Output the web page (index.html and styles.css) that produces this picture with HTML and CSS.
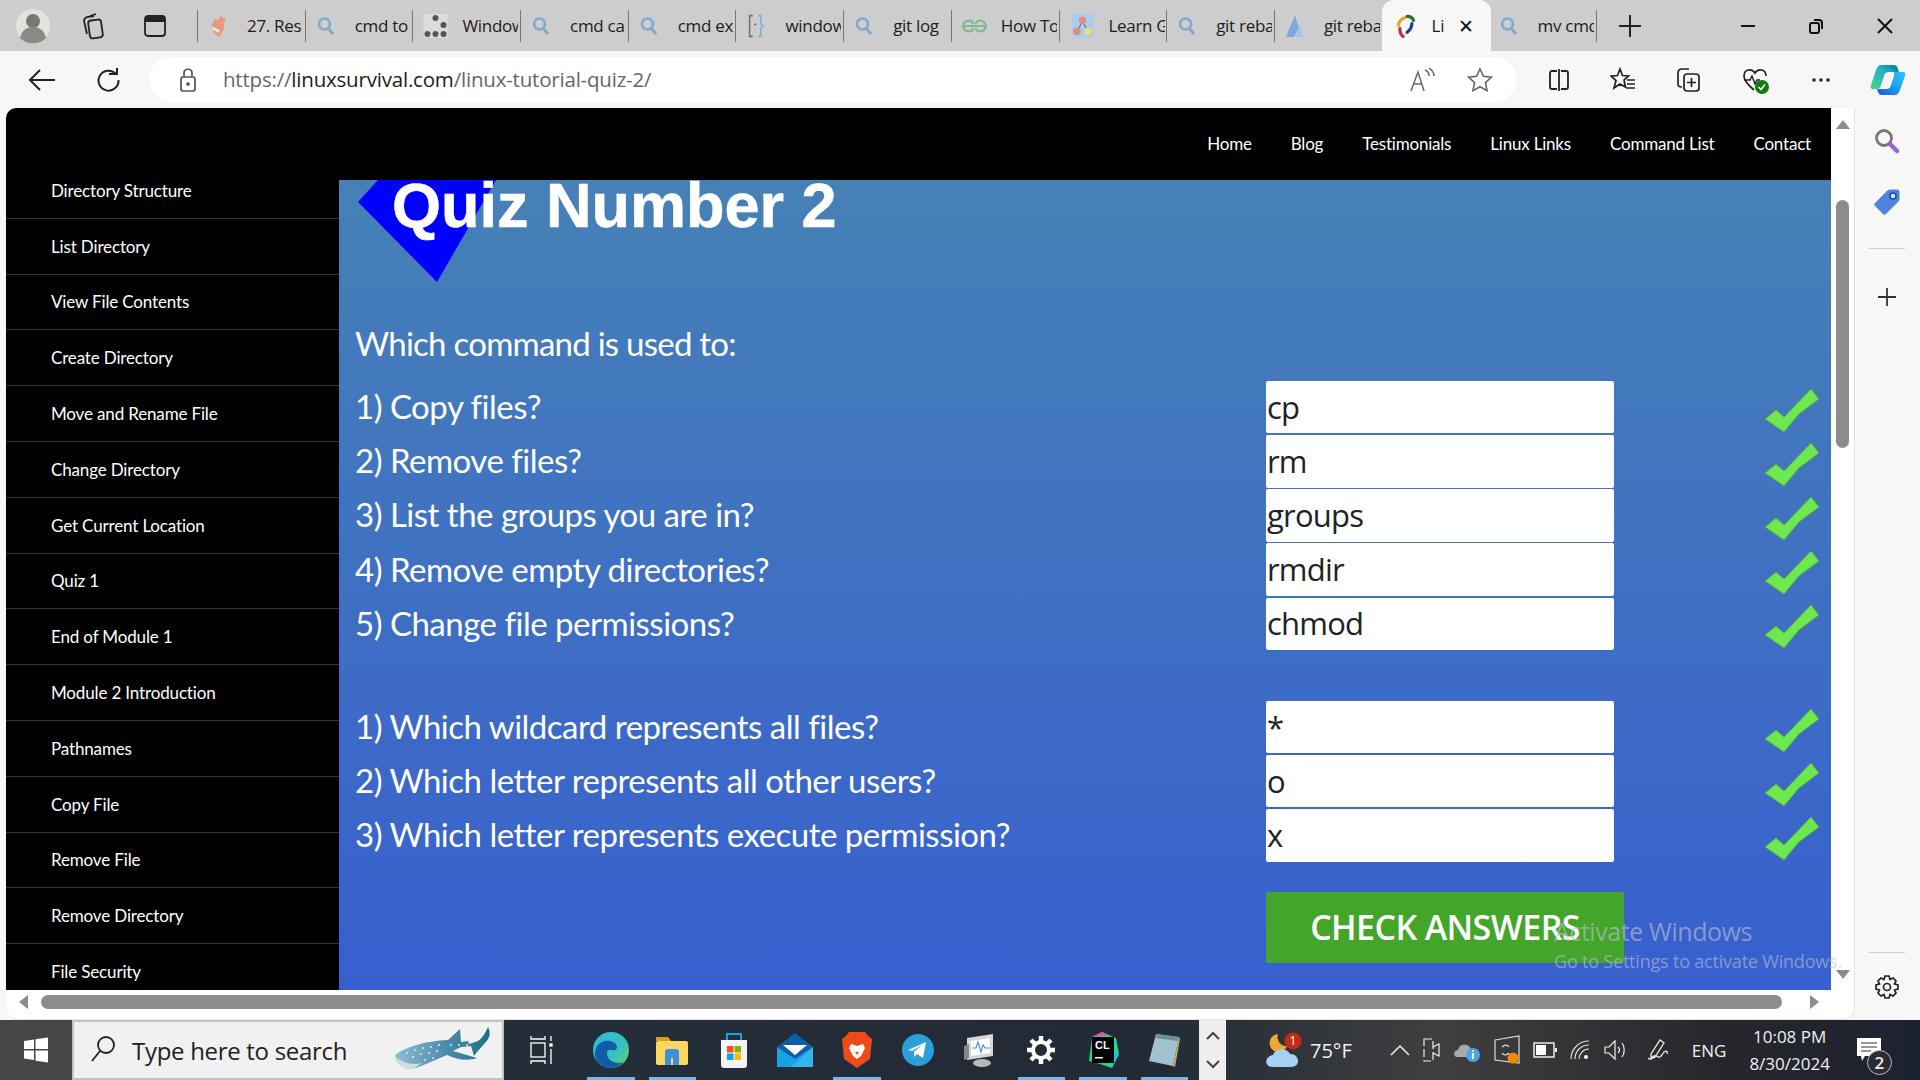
FILE: index.html
```html
<!DOCTYPE html>
<html lang="en">
<head>
    <meta charset="UTF-8">
    <title>Linux Tutorial Quiz 2</title>
    <link rel="stylesheet" href="styles.css">
</head>
<body>
    <svg class="defs" width="0" height="0">
        <symbol id="tick" viewBox="0 0 54 44"><polygon points="0,30 11,21 19,28 46,0 54,10 34,25 19,43" fill="#6ee84f" stroke="#5aa84a" stroke-width="1"/></symbol>
        <symbol id="lens" viewBox="0 0 20 20"><circle cx="8.5" cy="8" r="5.5" fill="none" stroke="#7fa9cf" stroke-width="2.6"/><path d="M12.5 12.5L17 18" stroke="#7fa9cf" stroke-width="2.8"/></symbol>
    </svg>

    <div class="tabstrip">
        <div class="strip-left">
            <svg class="strip-icon" width="36" height="36" viewBox="0 0 36 36"><circle cx="18" cy="18" r="17" fill="#e4e2da"/><circle cx="18" cy="13" r="7" fill="#777"/><path d="M5 30c2-9 8-11 13-11s11 2 13 11c-7 7-19 7-26 0z" fill="#8b8983"/></svg>
            <svg class="strip-icon" width="28" height="28" viewBox="0 0 28 28" fill="none" stroke="#222" stroke-width="1.8"><rect x="10" y="8" width="13" height="18" rx="3" transform="rotate(-8 16 17)"/><path d="M8 22L5 9c0-2 1-3 3-4l7-1M11 4l6-2"/></svg>
            <svg class="strip-icon strip-tabs" width="24" height="24" viewBox="0 0 24 24"><rect x="2" y="2" width="20" height="20" rx="3" fill="none" stroke="#222" stroke-width="1.8"/><rect x="2" y="2" width="20" height="6" fill="#222"/></svg>
        </div>
        <div class="tab"><svg class="fav" viewBox="0 0 20 26"><path d="M3 12L7 5l3 2 3-6 2 3 3 1-2 12-5 8-5-4z" fill="#e89a80"/><path d="M4 15l7 4" stroke="#f6e3da" stroke-width="3"/></svg><span class="tab-title">27. Res</span></div>
        <div class="tab"><svg class="fav"><use href="#lens"/></svg><span class="tab-title">cmd to</span></div>
        <div class="tab"><svg class="fav fav-wide" viewBox="0 0 24 24"><rect width="24" height="24" fill="#dcdcdc"/><g fill="#555"><circle cx="12" cy="4" r="3"/><circle cx="20" cy="11" r="3"/><circle cx="4" cy="20" r="3"/><circle cx="12" cy="20" r="3"/><circle cx="20" cy="20" r="3"/></g></svg><span class="tab-title">Window</span></div>
        <div class="tab"><svg class="fav"><use href="#lens"/></svg><span class="tab-title">cmd ca</span></div>
        <div class="tab"><svg class="fav"><use href="#lens"/></svg><span class="tab-title">cmd ex</span></div>
        <div class="tab"><svg class="fav" viewBox="0 0 20 30" fill="none" stroke-width="2"><path d="M6 2H2v26h4" stroke="#6b7680"/><path d="M13 2h3v10l3 3-3 3v10h-3" stroke="#73b5e0"/><circle cx="9" cy="13" r="1.2" fill="#555"/></svg><span class="tab-title">window</span></div>
        <div class="tab"><svg class="fav"><use href="#lens"/></svg><span class="tab-title">git log</span></div>
        <div class="tab"><svg class="fav fav-wide" viewBox="0 0 24 14" fill="none" stroke="#7fb98a" stroke-width="2"><path d="M12 7H1c1-6 8-7 10-2M12 7h11c-1-6-8-7-10-2M1 7c1 6 8 7 10 2M23 7c-1 6-8 7-10 2"/></svg><span class="tab-title">How To</span></div>
        <div class="tab"><svg class="fav fav-wide" viewBox="0 0 24 26"><rect width="24" height="26" rx="4" fill="#a9cdea"/><path d="M12 8L6 19M12 8l6 11" stroke="#557" stroke-width="1"/><circle cx="12" cy="7" r="4" fill="#e98880"/><circle cx="6" cy="19" r="4" fill="#e98880"/><circle cx="18" cy="19" r="4" fill="#ecdf7a"/></svg><span class="tab-title">Learn G</span></div>
        <div class="tab"><svg class="fav"><use href="#lens"/></svg><span class="tab-title">git reba</span></div>
        <div class="tab"><svg class="fav" viewBox="0 0 20 24"><path d="M10 1L1 23h8l5-9z" fill="#7fa9dc"/><path d="M11 5l8 18h-9l4-8z" fill="#a4c3e8"/></svg><span class="tab-title">git reba</span></div>
        <div class="tab tab-active">
            <svg class="fav fav-wide" viewBox="0 0 26 30" fill="none" stroke-width="4" stroke-linecap="round"><path d="M4 14c1-5 4-8 8-9" stroke="#e9a02a"/><path d="M6 18c0 5 1 8 4 10" stroke="#c0342a"/><path d="M15 3c4 0 7 2 8 5" stroke="#2f6b3a"/><path d="M21 12c0 5-2 8-6 11" stroke="#1f3f90"/></svg>
            <span class="tab-title tab-title-short">Li</span>
            <span class="tab-close">&#10005;</span>
        </div>
        <div class="tab tab-last"><svg class="fav"><use href="#lens"/></svg><span class="tab-title">mv cmd</span></div>
        <svg class="new-tab" width="24" height="24" viewBox="0 0 24 24"><path d="M12 1v22M1 12h22" stroke="#222" stroke-width="2"/></svg>
        <div class="window-controls">
            <svg width="16" height="16" viewBox="0 0 16 16"><path d="M1 8h14" stroke="#111" stroke-width="2"/></svg>
            <svg width="16" height="18" viewBox="0 0 16 18" fill="none" stroke="#111" stroke-width="2"><rect x="2" y="6" width="9" height="10" rx="2"/><path d="M6 3h5c2 0 3 1 3 3v6"/></svg>
            <svg width="18" height="18" viewBox="0 0 18 18"><path d="M2 2l14 14M16 2L2 16" stroke="#111" stroke-width="2"/></svg>
        </div>
    </div>

    <div class="toolbar">
        <svg class="tool-back" width="28" height="24" viewBox="0 0 28 24" fill="none" stroke="#222" stroke-width="2"><path d="M27 12H2M12 2L2 12l10 10"/></svg>
        <svg class="tool-reload" width="26" height="26" viewBox="0 0 26 26" fill="none" stroke="#222" stroke-width="2"><path d="M21 7a10 10 0 1 0 2.500 6"/><path d="M14 6h8V0" transform="translate(0 1)"/></svg>
        <div class="addressbar">
            <svg class="lock" width="18" height="24" viewBox="0 0 18 24" fill="none" stroke="#555" stroke-width="1.7"><rect x="2" y="9" width="14" height="14" rx="2"/><path d="M5 9V5c0-5 8-5 8 0v4"/><circle cx="9" cy="16" r="1" fill="#555"/></svg>
            <div class="url">https://<span class="url-host">linuxsurvival.com</span>/linux-tutorial-quiz-2/</div>
            <svg class="read-aloud" width="26" height="26" viewBox="0 0 26 26" fill="none" stroke="#666" stroke-width="1.5"><path d="M2 24L9 5l6 19M4.500 17h9"/><path d="M16 3c3 1 4 3 4 6M20 1c3 2 5 4 5 8"/></svg>
            <svg class="star" width="26" height="26" viewBox="0 0 26 26" fill="none" stroke="#666" stroke-width="1.6"><path d="M13 2l3.400 7.300 8 .9-6 5.500 1.700 8L13 19.700l-7.100 4 1.700-8-6-5.500 8-.9z"/></svg>
        </div>
        <div class="tools-right">
            <svg width="24" height="24" viewBox="0 0 24 24" fill="none" stroke="#222" stroke-width="1.8"><path d="M10 3H5a2 2 0 0 0-2 2v14a2 2 0 0 0 2 2h5M14 3h5a2 2 0 0 1 2 2v14a2 2 0 0 1-2 2h-5M12 1v22"/></svg>
            <svg width="26" height="26" viewBox="0 0 26 26" fill="none" stroke="#222" stroke-width="1.7"><path d="M10 2l2.500 6.500 6 .5-4.500 4 1.500 7L10 17l-6 4 2-7.500L1 9l6.500-.5zM17 13h8M17 17h8M16 21h9"/></svg>
            <svg width="26" height="26" viewBox="0 0 26 26" fill="none" stroke="#222" stroke-width="1.7"><path d="M6 20c-3 0-4-1-4-3V6c0-3 2-4 4-4h7"/><rect x="8" y="7" width="15" height="17" rx="3"/><path d="M15.500 11v9M11 15.500h9"/></svg>
            <svg width="30" height="30" viewBox="0 0 30 30"><path d="M13 25C7 20 3 16 3 11c0-7 8-8 11-3 3-5 11-4 11 3" fill="none" stroke="#222" stroke-width="1.7"/><path d="M3 15h6l2-4 3 8 2-4h3" fill="none" stroke="#222" stroke-width="1.5"/><circle cx="21" cy="22" r="7" fill="#107c10"/><path d="M17.500 22l2.500 2.500 4-5" fill="none" stroke="#fff" stroke-width="1.6"/></svg>
            <svg width="20" height="6" viewBox="0 0 20 6" fill="#222"><circle cx="3" cy="3" r="1.800"/><circle cx="10" cy="3" r="1.800"/><circle cx="17" cy="3" r="1.800"/></svg>
            <svg width="36" height="32" viewBox="0 0 36 32"><defs><linearGradient id="cp1" x1="0" y1="1" x2="1" y2="0"><stop offset="0" stop-color="#4fd08a"/><stop offset=".6" stop-color="#1fb4c8"/><stop offset="1" stop-color="#0f6f9c"/></linearGradient><linearGradient id="cp2" x1="0" y1="1" x2="1" y2="0"><stop offset="0" stop-color="#1f4fd8"/><stop offset=".5" stop-color="#1a9ff0"/><stop offset="1" stop-color="#38c4f4"/></linearGradient></defs><path d="M11 1h13c2 0 3 1 4 4l1 3H19c-3 0-4 1-5 4l-3 9c-1 3-2 4-4 4H3c-2 0-3-1-2-4L6 6c1-3 3-5 5-5z" fill="url(#cp1)"/><path d="M24 8h9c2 0 3 1 2 4l-5 14c-1 3-3 5-5 5H12c-2 0-3-1-4-3l-1-3h9c3 0 4-1 5-4l3-9c0-3 0-4 0-4z" fill="url(#cp2)"/></svg>
        </div>
    </div>

    <div class="browser-body">
        <div class="viewport">
            <div class="viewport-row">
                <div class="page">
                    <header class="site-header">
                        <nav class="site-nav">
                            <a>Home</a>
                            <a>Blog</a>
                            <a>Testimonials</a>
                            <a>Linux Links</a>
                            <a>Command List</a>
                            <a>Contact</a>
                        </nav>
                    </header>
                    <div class="site-main">
                        <aside class="side-menu">
                            <a>Directory Structure</a>
                            <a>List Directory</a>
                            <a>View File Contents</a>
                            <a>Create Directory</a>
                            <a>Move and Rename File</a>
                            <a>Change Directory</a>
                            <a>Get Current Location</a>
                            <a>Quiz 1</a>
                            <a>End of Module 1</a>
                            <a>Module 2 Introduction</a>
                            <a>Pathnames</a>
                            <a>Copy File</a>
                            <a>Remove File</a>
                            <a>Remove Directory</a>
                            <a>File Security</a>
                        </aside>
                        <main class="quiz">
                            <div class="quiz-title">
                                <svg class="diamond" width="160" height="102" viewBox="0 0 160 102"><polygon points="23,0 3,22 82,102 141,0" fill="#0000ff"/></svg>
                                <h1>Quiz Number 2</h1>
                            </div>
                            <p class="quiz-lead">Which command is used to:</p>
                            <div class="quiz-group">
                                <label class="quiz-row"><span>1) Copy files?</span><input class="answer" value="cp"><svg class="tick"><use href="#tick"/></svg></label>
                                <label class="quiz-row"><span>2) Remove files?</span><input class="answer" value="rm"><svg class="tick"><use href="#tick"/></svg></label>
                                <label class="quiz-row"><span>3) List the groups you are in?</span><input class="answer" value="groups"><svg class="tick"><use href="#tick"/></svg></label>
                                <label class="quiz-row"><span>4) Remove empty directories?</span><input class="answer" value="rmdir"><svg class="tick"><use href="#tick"/></svg></label>
                                <label class="quiz-row"><span>5) Change file permissions?</span><input class="answer" value="chmod"><svg class="tick"><use href="#tick"/></svg></label>
                            </div>
                            <div class="quiz-group quiz-group-next">
                                <label class="quiz-row"><span>1) Which wildcard represents all files?</span><input class="answer" value="*"><svg class="tick"><use href="#tick"/></svg></label>
                                <label class="quiz-row"><span>2) Which letter represents all other users?</span><input class="answer" value="o"><svg class="tick"><use href="#tick"/></svg></label>
                                <label class="quiz-row"><span>3) Which letter represents execute permission?</span><input class="answer" value="x"><svg class="tick"><use href="#tick"/></svg></label>
                            </div>
                            <button class="check-btn">CHECK ANSWERS</button>
                        </main>
                    </div>
                </div>
                <div class="vscroll">
                    <span class="arrow-up"></span>
                    <span class="vthumb"></span>
                    <span class="arrow-down"></span>
                </div>
            </div>
            <div class="hscroll">
                <span class="arrow-left"></span>
                <span class="hthumb"></span>
                <span class="arrow-right"></span>
            </div>
            <div class="watermark">
                <div class="watermark-big">Activate Windows</div>
                <div class="watermark-small">Go to Settings to activate Windows.</div>
            </div>
        </div>
        <div class="edge-bar">
            <svg class="edge-search" width="26" height="26" viewBox="0 0 26 26" fill="none"><circle cx="10" cy="10" r="7.500" stroke="#777" stroke-width="2.800"/><path d="M16 16l7 7" stroke="#9a63d8" stroke-width="4.500" stroke-linecap="round"/></svg>
            <svg class="edge-tag" width="26" height="26" viewBox="0 0 26 26"><path d="M1 14L13 2c1-1 2-1.500 4-1.500h6c1.500 0 2.500 1 2.500 2.500v6c0 2-.5 3-1.500 4L12 25c-1 1-2 1-3 0l-8-8c-1-1-1-2 0-3z" fill="#4f83e0"/><circle cx="19" cy="7" r="3" fill="#dfeafb" stroke="#23479c" stroke-width="1.500"/></svg>
            <span class="edge-line"></span>
            <svg class="edge-plus" width="20" height="20" viewBox="0 0 20 20"><path d="M10 1v18M1 10h18" stroke="#333" stroke-width="1.800"/></svg>
            <span class="edge-line edge-line-low"></span>
            <svg class="edge-gear" width="26" height="26" viewBox="0 0 26 26" fill="none" stroke="#222" stroke-width="1.700"><path d="M11 2h4l1 3.500 3-1.500 3 3-1.500 3 3.500 1v4l-3.500 1 1.500 3-3 3-3-1.500-1 3.500h-4l-1-3.500-3 1.500-3-3 1.500-3L2 15v-4l3.500-1L4 7l3-3 3 1.500z"/><circle cx="13" cy="13" r="3.500"/></svg>
        </div>
    </div>

    <footer class="taskbar">
        <div class="tb-start">
            <svg width="26" height="26" viewBox="0 0 26 26" fill="#fff"><path d="M1 4l10-1.500V12H1zM12.500 2.300L25 .5V12H12.500zM1 13.500h10V23L1 21.500zM12.500 13.500H25v12l-12.500-1.800z"/></svg>
        </div>
        <div class="tb-search">
            <svg class="search-lens" width="26" height="30" viewBox="0 0 26 30" fill="none" stroke="#222" stroke-width="1.800"><circle cx="16" cy="10" r="8"/><path d="M10 16L2 26"/></svg>
            <span class="search-text">Type here to search</span>
            <svg class="whale" width="96" height="46" viewBox="0 0 96 46"><defs><linearGradient id="shark" x1="0" y1="0" x2="1" y2="0"><stop offset="0" stop-color="#8fbdd6"/><stop offset=".5" stop-color="#4f8fae"/><stop offset="1" stop-color="#1f6f88"/></linearGradient></defs><path d="M0 28C10 20 30 14 53 13L65 2l1 13 7-1 1 3 6-2c5-1 9-6 13-15 3 6 2 11-3 16l-8 9-3 4-3-10-10 1-8 4 24 7c-8 3-20 2-30-3l-7 3-14 6C12 46 3 42 0 28z" fill="url(#shark)"/><path d="M1 30c8 7 18 8 26 6l-9 6C10 44 3 40 1 30z" fill="#cfe0d8"/><g fill="#d8eaf2"><circle cx="12" cy="26" r="1"/><circle cx="20" cy="23" r="1"/><circle cx="28" cy="21" r="1"/><circle cx="36" cy="20" r="1"/><circle cx="44" cy="18" r="1"/><circle cx="18" cy="30" r="1"/><circle cx="26" cy="27" r="1"/><circle cx="34" cy="26" r="1"/><circle cx="42" cy="24" r="1"/><circle cx="30" cy="33" r="1"/><circle cx="38" cy="31" r="1"/><circle cx="56" cy="18" r="1"/><circle cx="64" cy="18" r="1"/><circle cx="72" cy="18" r="1"/></g></svg>
        </div>
        <div class="tb-apps">
            <div class="app app-taskview"><svg width="24" height="30" viewBox="0 0 24 30" fill="none" stroke="#fff" stroke-width="1.300"><path d="M1 1v3h14V1M1 29v-3h14v3"/><rect x="1" y="8" width="14" height="14"/><path d="M21 1v5M21 14v15"/><rect x="20" y="9" width="2" height="2" fill="#fff"/></svg></div>
            <div class="app app-open"><svg width="36" height="36" viewBox="0 0 36 36"><defs><linearGradient id="edg" x1="0" y1="0" x2="1" y2="1"><stop offset="0" stop-color="#2fb9d8"/><stop offset=".6" stop-color="#35c1c0"/><stop offset="1" stop-color="#6fd65c"/></linearGradient></defs><circle cx="18" cy="18" r="18" fill="url(#edg)"/><path d="M2 22C2 12 10 8 17 9c7 1 9 8 5 9-4 1-8-2-8 4 0 6 7 9 12 9 2 0 4-1 5-2-4 5-8 7-13 7C9 36 2 30 2 22z" fill="#0f5da8"/></svg></div>
            <div class="app app-open"><svg width="34" height="30" viewBox="0 0 34 30"><path d="M1 2h12l3 4H1z" fill="#d9a016"/><rect x="1" y="6" width="32" height="24" rx="2" fill="#fcd860"/><path d="M10 30V17c0-2 1-3 3-3h8c2 0 3 1 3 3v13h-6v-7h-2v7z" fill="#3f8fd8"/></svg></div>
            <div class="app"><svg width="28" height="36" viewBox="0 0 28 36"><path d="M7 10V2h14v8" fill="none" stroke="#1ba1e2" stroke-width="2"/><path d="M1 8h26v25c0 2-1 3-3 3H4c-2 0-3-1-3-3z" fill="#f4f4f4"/><rect x="7" y="14" width="6.500" height="6.500" fill="#f25022"/><rect x="14.500" y="14" width="6.500" height="6.500" fill="#7fba00"/><rect x="7" y="21.500" width="6.500" height="6.500" fill="#00a4ef"/><rect x="14.500" y="21.500" width="6.500" height="6.500" fill="#ffb900"/></svg></div>
            <div class="app"><svg width="36" height="34" viewBox="0 0 36 34"><path d="M18 0L36 14v20H0V14z" fill="#0f5fa8"/><path d="M6 12h24l-12 10z" fill="#fff"/><path d="M0 14l18 12 18-12v20H0z" fill="#1ba1e2"/><path d="M36 14v20H14z" fill="#35c0f2" opacity=".7"/></svg></div>
            <div class="app app-open"><svg width="30" height="36" viewBox="0 0 30 36"><path d="M7 0h16l3 4 4 3-2 20-13 9-13-9L0 7l4-3z" fill="#f04a1a"/><path d="M9 12l6 2 6-2 2 4-4 8-4 3-4-3-4-8z" fill="#fff"/><path d="M13 20h4l-2 3z" fill="#f04a1a"/></svg></div>
            <div class="app"><svg width="32" height="32" viewBox="0 0 32 32"><circle cx="16" cy="16" r="16" fill="#2a9fd8"/><path d="M6 16l18-8-3 16-6-4-3 3v-5l8-7-10 6z" fill="#fff"/></svg></div>
            <div class="app"><svg width="34" height="36" viewBox="0 0 34 36"><path d="M4 6l26-4v22L4 28z" fill="#d7d7d7"/><path d="M8 9l19-3v15L8 24z" fill="#fff"/><path d="M9 16h4l2-6 3 10 2-7 2 3h5" fill="none" stroke="#4b93d6" stroke-width="1.200"/><path d="M1 14l5-2v14l-5 2z" fill="#888"/><ellipse cx="19" cy="31" rx="9" ry="4" fill="#b8b8b8"/></svg></div>
            <div class="app app-open"><svg width="28" height="28" viewBox="0 0 28 28" fill="none" stroke="#fff" stroke-width="4"><circle cx="14" cy="14" r="8"/><path d="M14 0v6M14 22v6M0 14h6M22 14h6M4 4l4 4M20 20l4 4M4 24l4-4M20 8l4-4" stroke-width="4.500"/></svg></div>
            <div class="app app-open"><svg width="32" height="36" viewBox="0 0 32 36"><path d="M5 5l10-5 14 6 3 16-7 14-12-4-11-3z" fill="#21d789"/><path d="M5 5l10-5 6 3z" fill="#f14ba3"/><path d="M25 36l7-14-6-3z" fill="#2cb5e8"/><rect x="5" y="5" width="22" height="26" fill="#000"/><text class="clion-text" x="8" y="17">CL</text><rect x="8" y="25" width="8" height="1.500" fill="#fff"/></svg></div>
            <div class="app app-open"><svg width="32" height="34" viewBox="0 0 32 34"><path d="M8 1l23 3-6 29L1 28z" fill="#9fc4cf"/><path d="M8 1l23 3-1 4L7 5z" fill="#6d8f9a"/><path d="M25 33l6-29 1 2-5 28z" fill="#caa86a"/></svg></div>
        </div>
        <div class="tb-scroll">
            <svg width="14" height="9" viewBox="0 0 14 9" fill="none" stroke="#444" stroke-width="2"><path d="M1 8l6-6 6 6"/></svg>
            <svg width="14" height="9" viewBox="0 0 14 9" fill="none" stroke="#444" stroke-width="2"><path d="M1 1l6 6 6-6"/></svg>
        </div>
        <div class="tb-tray">
            <div class="weather">
                <svg width="38" height="36" viewBox="0 0 38 36"><path d="M12 2a9 9 0 1 0 9 12A9 9 0 0 1 12 2z" fill="#f0a830"/><path d="M7 35c-9 0-9-11 0-12 2-7 14-8 17-1 9-1 12 13 1 13z" fill="#a8d0f0"/><circle cx="27" cy="9" r="8.500" fill="#c42b1c"/><text class="weather-badge" x="27" y="13">1</text></svg>
                <span class="temp">75°F</span>
            </div>
            <div class="tray-icons">
                <svg width="20" height="12" viewBox="0 0 20 12" fill="none" stroke="#eee" stroke-width="1.500"><path d="M1 11l9-9 9 9"/></svg>
                <svg width="18" height="28" viewBox="0 0 18 28" fill="none" stroke="#eee" stroke-width="1.200"><path d="M1 3h9v22H1z" stroke-dasharray="8 3"/><path d="M10 11l6-3v12l-6-3"/></svg>
                <svg width="26" height="26" viewBox="0 0 26 26"><path d="M3 20c-4 0-4-7 1-7 1-7 12-7 13 0 5 0 4 7 0 7z" fill="#a9a9a9"/><circle cx="19" cy="18" r="7" fill="#4aa6e8"/><path d="M19 16v6M19 13v1.500" stroke="#fff" stroke-width="2"/></svg>
                <svg width="26" height="30" viewBox="0 0 26 30"><path d="M1 5l24-4v27L1 25z" fill="none" stroke="#ddd" stroke-width="1.200"/><path d="M8 12c3-3 6-2 7 0M15 18c-3 3-6 2-7 0" fill="none" stroke="#ddd" stroke-width="1.300"/><circle cx="19" cy="23" r="5.500" fill="#f18a00"/></svg>
                <svg width="24" height="16" viewBox="0 0 24 16"><rect x="1" y="1" width="20" height="14" fill="none" stroke="#eee" stroke-width="1.500"/><rect x="3" y="3" width="10" height="10" fill="#fff"/><rect x="22" y="6" width="2" height="4" fill="#eee"/></svg>
                <svg width="20" height="20" viewBox="0 0 20 20" fill="none" stroke="#ddd" stroke-width="1.200"><path d="M1 19C1 9 9 1 19 1M5 19c0-8 6-14 14-14M9 19c0-5 4-10 10-10"/><circle cx="16" cy="17" r="2" fill="#fff" stroke="none"/></svg>
                <svg width="22" height="22" viewBox="0 0 22 22" fill="none" stroke="#eee" stroke-width="1.200"><path d="M1 8h4l6-6v18l-6-6H1zM14 8c2 2 2 4 0 6M18 4c3 4 3 10 0 14"/></svg>
            </div>
            <svg class="pen" width="22" height="24" viewBox="0 0 22 24" fill="none" stroke="#eee" stroke-width="1.300"><path d="M13 2l4 3-9 14-4 2 0-5zM1 20c4 4 4-4 8-2s4 2 8-4c3-2 4 0 3 2"/></svg>
            <span class="lang">ENG</span>
            <div class="clock">
                <span>10:08 PM</span>
                <span>8/30/2024</span>
            </div>
            <div class="notify">
                <svg width="26" height="26" viewBox="0 0 26 26"><path d="M1 1h24v18H9l-3 5-1-5H1z" fill="#fff"/><path d="M5 6h16M5 10h16M5 14h10" stroke="#333" stroke-width="1.200"/></svg>
                <span class="notify-count">2</span>
            </div>
        </div>
    </footer>
</body>
</html>
```

FILE: styles.css
```css
* {
    box-sizing: border-box;
}
html, body {
    height: 100%;
}
body {
    margin: 0;
    height: 1080px;
    overflow: hidden;
    display: flex;
    flex-direction: column;
    font-family: 'Open Sans', sans-serif;
    background-color: #f7f7f7;
}
.defs {
    position: absolute;
}

/* tab strip */
.tabstrip {
    height: 51px;
    flex: none;
    display: flex;
    align-items: center;
    background-color: #cdcdcd;
}
.strip-left {
    width: 197px;
    flex: none;
    display: flex;
    align-items: center;
    padding-left: 15px;
    gap: 28px;
}
.strip-tabs {
    margin-left: 8px;
}
.tab {
    width: 107.7px;
    height: 32px;
    flex: none;
    display: flex;
    align-items: center;
    padding-left: 10px;
    border-left: 1px solid #777;
    overflow: hidden;
}
.tab + .tab-active + .tab-last {
    border-left: none;
}
.tab-last {
    width: 106px;
    border-right: 1px solid #777;
    padding-left: 8px;
}
.fav {
    width: 20px;
    height: 24px;
    flex: none;
    margin-right: 19px;
}
.fav-wide {
    width: 25px;
    margin-right: 14px;
}
.tab-title {
    font-size: 17px;
    letter-spacing: -0.3px;
    color: #1c1c1c;
    white-space: nowrap;
    overflow: hidden;
    width: 56px;
    flex: none;
}
.tab-active {
    height: 51px;
    width: 109px;
    border-left: none;
    background-color: #f7f7f7;
    border-radius: 12px 12px 0 0;
    padding-left: 11px;
}
.tab-active .fav {
    margin-right: 14px;
}
.tab-title-short {
    width: 20px;
}
.tab-close {
    font-size: 19px;
    color: #111;
    margin-left: 6px;
}
.new-tab {
    margin-left: 21px;
    flex: none;
}
.window-controls {
    margin-left: auto;
    display: flex;
    align-items: center;
    gap: 52px;
    padding-right: 26px;
}

/* toolbar */
.toolbar {
    height: 57px;
    flex: none;
    display: flex;
    align-items: center;
    background-color: #f7f7f7;
    padding-left: 28px;
}
.tool-reload {
    margin-left: 39px;
}
.addressbar {
    width: 1368px;
    height: 45px;
    margin-left: 28px;
    display: flex;
    align-items: center;
    background-color: #fff;
    border-radius: 23px;
    padding-left: 30px;
}
.url {
    margin: 0 0 2px 26px;
    font-size: 20.5px;
    letter-spacing: -0.2px;
    color: #666;
}
.url-host {
    color: #1c1c1c;
}
.read-aloud {
    margin-left: auto;
}
.star {
    margin-left: 32px;
    margin-right: 24px;
}
.tools-right {
    flex: 1;
    display: flex;
    align-items: center;
    justify-content: space-between;
    padding: 0 14px 0 30px;
}

/* browser viewport */
.browser-body {
    flex: 1;
    min-height: 0;
    display: flex;
    padding-left: 6px;
}
.viewport {
    position: relative;
    width: 1849px;
    flex: none;
    background-color: #fff;
    border-radius: 10px 0 12px 12px;
    border-right: 1px solid #e4e4e4;
    border-bottom: 1px solid #e4e4e4;
    overflow: hidden;
    height: 912px;
}
.viewport-row {
    display: flex;
    height: 882px;
}
.page {
    width: 1825px;
    flex: none;
    display: flex;
    flex-direction: column;
    overflow: hidden;
}
.site-header {
    height: 72px;
    flex: none;
    background-color: #000;
    display: flex;
    justify-content: flex-end;
    align-items: center;
    padding: 0 20px 2px 0;
}
.site-nav {
    display: flex;
    gap: 39px;
}
.site-nav a {
    font-family: 'Lato', sans-serif;
    font-size: 17px;
    letter-spacing: -0.2px;
    color: #fff;
}
.site-main {
    flex: 1;
    min-height: 0;
    display: flex;
}
/* menu starts a little above the blue area, under the header */
.side-menu {
    width: 333px;
    flex: none;
    margin-top: -17px;
    background-color: #000;
    overflow: hidden;
}
.side-menu a {
    display: flex;
    align-items: center;
    height: 55.8px;
    padding-left: 45px;
    border-bottom: 1px solid #333;
    font-family: 'Lato', sans-serif;
    font-size: 17px;
    letter-spacing: -0.15px;
    color: #fff;
}

/* quiz */
.quiz {
    flex: 1;
    position: relative;
    overflow: hidden;
    padding: 0 0 0 16px;
    background: linear-gradient(#4681b6, #385fcf);
}
.quiz-title {
    height: 136px;
    position: relative;
}
.diamond {
    position: absolute;
    left: 0;
    top: 0;
}
.quiz-title h1 {
    position: relative;
    margin: 0;
    padding-left: 37px;
    font-family: 'Liberation Sans', sans-serif;
    font-weight: bold;
    font-size: 63px;
    line-height: 50px;
    -webkit-text-stroke: 0.6px #fff;
    color: #fff;
}
.quiz-lead {
    margin: 0;
    height: 64px;
    padding-top: 5px;
    font-family: 'Lato', sans-serif;
    font-size: 33px;
    letter-spacing: -0.75px;
    line-height: 44px;
    color: #fff;
}
.quiz-row {
    display: flex;
    align-items: center;
    height: 54.2px;
}
.quiz-row span {
    width: 911px;
    flex: none;
    margin-bottom: 2px;
    font-family: 'Lato', sans-serif;
    font-size: 33px;
    letter-spacing: -0.5px;
    color: #fff;
}
.answer {
    width: 348px;
    height: 52.5px;
    flex: none;
    padding: 0 1px 1px;
    border: none;
    border-radius: 2px;
    background-color: #fff;
    font-family: 'Open Sans', sans-serif;
    font-size: 31px;
    letter-spacing: -0.8px;
    color: #222;
}
.tick {
    width: 54px;
    height: 44px;
    flex: none;
    margin: 7px 0 0 151px;
}
.quiz-group-next {
    margin-top: 49px;
}
.check-btn {
    display: block;
    width: 358px;
    height: 71px;
    margin: 29px 0 0 911px;
    border: none;
    border-radius: 2px;
    background-color: #43a52a;
    font-family: 'Open Sans', sans-serif;
    font-weight: 600;
    font-size: 34px;
    letter-spacing: -0.6px;
    color: #fff;
}

/* scrollbars */
.vscroll {
    width: 23px;
    flex: none;
    display: flex;
    flex-direction: column;
    align-items: center;
}
.arrow-up {
    margin-top: 12px;
    border: 7px solid transparent;
    border-top: none;
    border-bottom: 9px solid #8c8c8c;
}
.vthumb {
    width: 13px;
    height: 248px;
    margin-top: 71px;
    background-color: #8c8c8c;
    border-radius: 7px;
}
.arrow-down {
    margin-top: auto;
    margin-bottom: 11px;
    border: 7px solid transparent;
    border-bottom: none;
    border-top: 9px solid #8c8c8c;
}
.hscroll {
    height: 30px;
    display: flex;
    align-items: flex-start;
    padding: 5px 0 0 13px;
}
.arrow-left {
    margin-top: 0;
    border: 7px solid transparent;
    border-left: none;
    border-right: 9px solid #8c8c8c;
}
.hthumb {
    width: 1741px;
    height: 14px;
    margin-left: 13px;
    background-color: #8c8c8c;
    border-radius: 7px;
}
.arrow-right {
    margin-left: 28px;
    border: 7px solid transparent;
    border-right: none;
    border-left: 9px solid #8c8c8c;
}
.watermark {
    position: absolute;
    left: 1548px;
    top: 808px;
    color: rgba(190, 195, 205, 0.6);
    white-space: nowrap;
}
.watermark-big {
    font-size: 25px;
    letter-spacing: -0.45px;
    line-height: 30px;
}
.watermark-small {
    font-size: 18px;
    letter-spacing: -0.2px;
    line-height: 30px;
}

/* edge sidebar */
.edge-bar {
    flex: 1;
    display: flex;
    flex-direction: column;
    align-items: center;
    padding-right: 2px;
}
.edge-search {
    margin-top: 20px;
}
.edge-tag {
    margin-top: 35px;
}
.edge-line {
    width: 36px;
    height: 1px;
    background-color: #d0d0d0;
    margin-top: 33px;
}
.edge-plus {
    margin-top: 38px;
}
.edge-line-low {
    margin-top: 645px;
}
.edge-gear {
    margin-top: 21px;
}

/* taskbar */
.taskbar {
    height: 60px;
    flex: none;
    display: flex;
    align-items: stretch;
    background: linear-gradient(90deg, #27313b 0, #222b35 60%, #3f3f40 75%, #26272c 90%, #1d2230 100%);
}
.tb-start {
    width: 72px;
    flex: none;
    display: flex;
    align-items: center;
    justify-content: center;
    background-color: #474644;
}
.tb-search {
    width: 432px;
    flex: none;
    display: flex;
    align-items: center;
    background-color: #f1f1f1;
    border: 2px solid #c2c2c2;
    padding-left: 16px;
}
.search-text {
    margin-left: 16px;
    font-size: 24px;
    letter-spacing: -0.3px;
    color: #222;
}
.whale {
    margin-left: auto;
    margin-right: 11px;
}
.tb-apps {
    width: 695px;
    flex: none;
    display: flex;
}
.app {
    width: 61.5px;
    flex: none;
    display: flex;
    align-items: center;
    justify-content: center;
    position: relative;
}
.app-taskview {
    width: 76px;
}
.app-open::after {
    content: "";
    position: absolute;
    left: 7px;
    right: 7px;
    bottom: 0;
    height: 3px;
    background-color: #76b9ed;
}
.clion-text {
    font-family: 'Liberation Sans', sans-serif;
    font-weight: bold;
    font-size: 11px;
    fill: #fff;
}
.tb-scroll {
    width: 27px;
    flex: none;
    display: flex;
    flex-direction: column;
    align-items: center;
    justify-content: center;
    gap: 20px;
    background-color: #eeeeee;
}
.tb-tray {
    flex: 1;
    display: flex;
    align-items: center;
    color: #f0f0f0;
}
.weather {
    display: flex;
    align-items: center;
    margin-left: 40px;
    gap: 6px;
}
.weather-badge {
    font-size: 12px;
    text-anchor: middle;
    fill: #fff;
}
.temp {
    font-size: 20px;
}
.tray-icons {
    width: 236px;
    margin-left: 38px;
    display: flex;
    align-items: center;
    justify-content: space-between;
}
.pen {
    margin-left: 21px;
}
.lang {
    margin-left: 23px;
    font-size: 17px;
}
.clock {
    margin-left: 23px;
    display: flex;
    flex-direction: column;
    align-items: center;
    gap: 5px;
    font-size: 17px;
    line-height: 22px;
}
.notify {
    position: relative;
    margin-left: 26px;
    height: 26px;
}
.notify-count {
    position: absolute;
    left: 11px;
    top: 13px;
    width: 25px;
    height: 25px;
    border: 1px solid #bbb;
    border-radius: 50%;
    background-color: #2a2c33;
    text-align: center;
    font-size: 17px;
    font-weight: 600;
    line-height: 23px;
}
```
